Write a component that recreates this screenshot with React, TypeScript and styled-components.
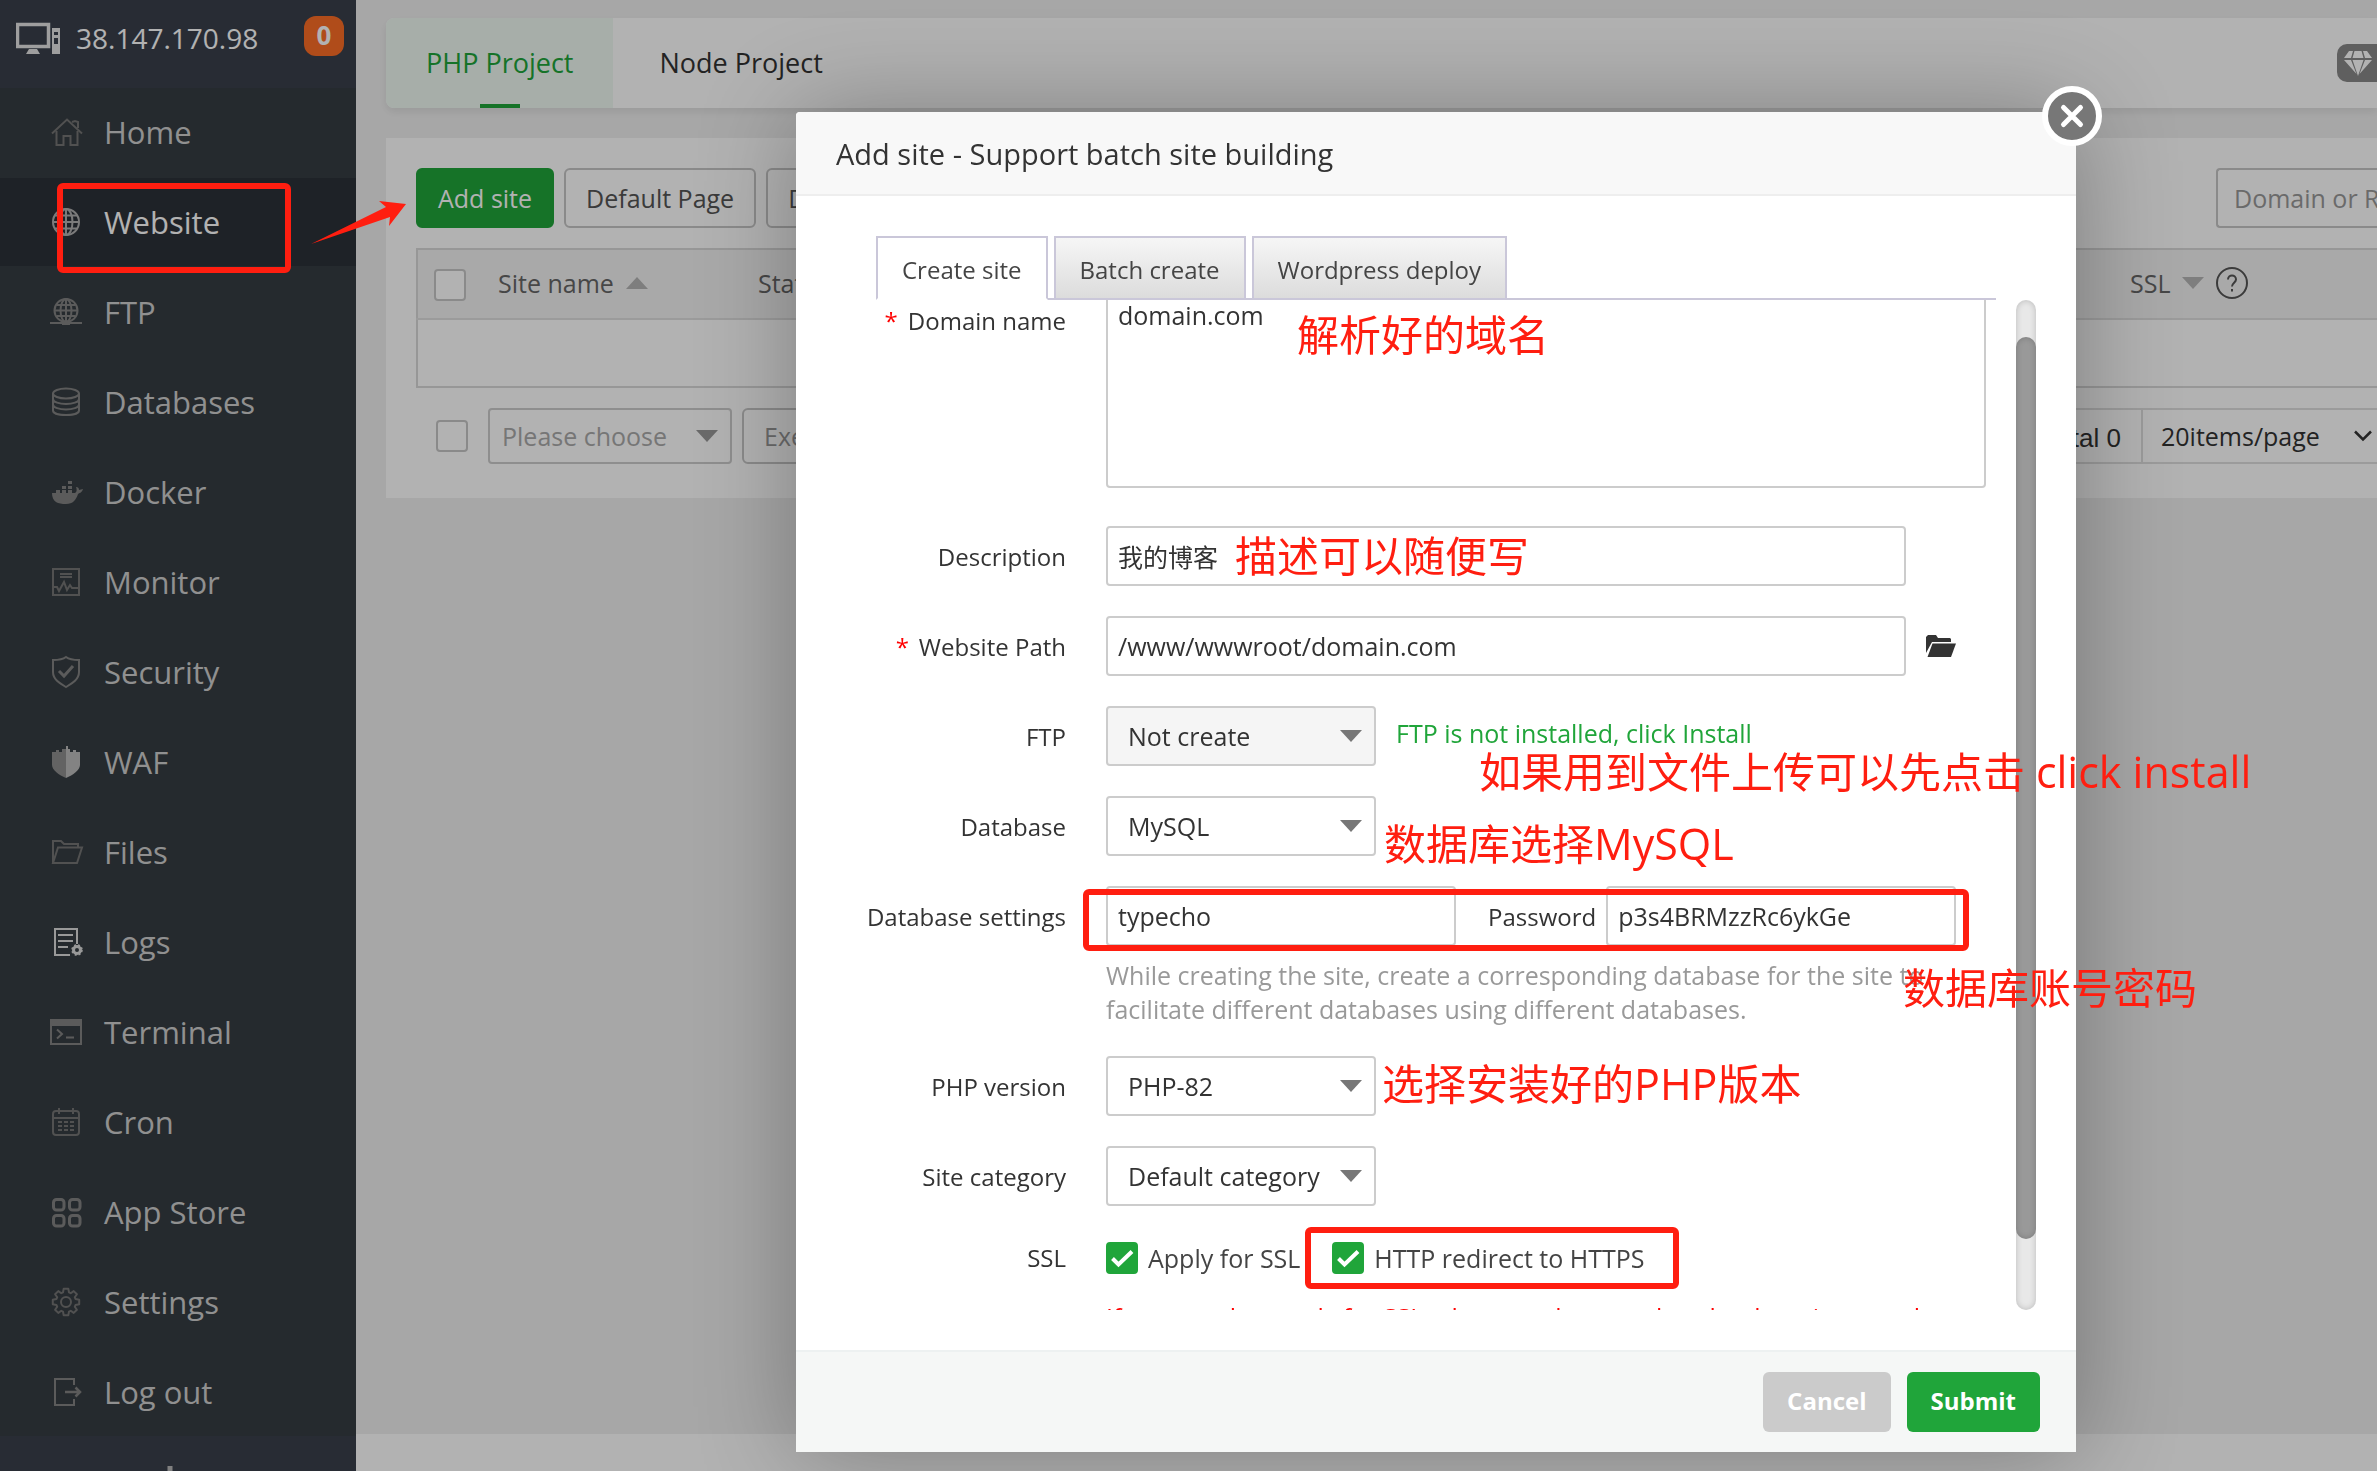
import React, { useEffect, useRef } from "react";
import styled, { createGlobalStyle, css } from "styled-components";

const GlobalStyle = createGlobalStyle`
  *, *::before, *::after { box-sizing: border-box; }
  html, body { margin: 0; padding: 0; overflow: hidden; }
  body, button, input, select, textarea {
    font-family: "Open Sans", "Noto Sans CJK SC", sans-serif;
    font-size: 25px;
    color: #333;
  }
  button { cursor: pointer; }
`;

/* ---------- shell ---------- */

const Shell = styled.div`
  display: flex;
  height: 100vh;
  background: #f0f0f0;
  overflow: hidden;
`;

const Sidebar = styled.aside`
  display: flex;
  flex-direction: column;
  flex: 0 0 356px;
  background: #3a404b;
`;

const ServerBar = styled.header`
  display: flex;
  align-items: flex-start;
  flex: 0 0 88px;
  padding: 16px 12px 0 16px;
`;

const ServerIcon = styled.svg`
  width: 44px;
  height: 32px;
  margin: 6px 16px 0 0;
`;

const ServerName = styled.span`
  flex: 1;
  font-size: 28px;
  line-height: 44px;
  color: #fff;
`;

const Badge = styled.span`
  width: 40px;
  border-radius: 12px;
  background: #fc6d26;
  color: #fff;
  font-size: 26px;
  font-weight: 700;
  line-height: 38px;
  height: 40px;
  text-align: center;
`;

const Menu = styled.ul`
  display: flex;
  flex-direction: column;
  gap: 2px;
  margin: 0;
  padding: 0;
  list-style: none;
  background: #363d42;
`;

const MenuLink = styled.a<{ $active?: boolean }>`
  display: flex;
  align-items: center;
  gap: 22px;
  height: 88px;
  padding-left: 50px;
  color: ${(p) => (p.$active ? "#fff" : "#cfcfcf")};
  background: ${(p) => (p.$active ? "#2c3138" : "transparent")};
  font-size: 31px;
  text-decoration: none;
`;

const MenuIcon = styled.svg<{ $tone: string }>`
  width: 32px;
  height: 32px;
  overflow: visible;
  fill: none;
  color: ${(p) => p.$tone};
  stroke: currentColor;
  stroke-width: 2;
`;

const SidebarFoot = styled.div`
  display: flex;
  justify-content: center;
  padding-top: 30px;
  padding-right: 16px;
`;

const PlusIcon = styled.svg`
  width: 32px;
  height: 32px;
  flex: none;
`;

const Main = styled.main`
  display: flex;
  flex-direction: column;
  flex: 1;
  min-width: 0;
`;

const Content = styled.div`
  display: flex;
  flex-direction: column;
  flex: 1;
  gap: 30px;
  padding: 18px 0 0 30px;
`;

const PageFoot = styled.footer`
  height: 37px;
  background: #fff;
`;

/* ---------- page content ---------- */

const ProjectBar = styled.nav`
  display: flex;
  align-items: center;
  gap: 6px;
  height: 90px;
  border-radius: 8px 0 0 8px;
  background: #fff;
  box-shadow: 0 4px 8px rgba(0, 0, 0, 0.08);
`;

const ProjectTab = styled.a<{ $active?: boolean }>`
  position: relative;
  height: 90px;
  padding: 0 40px;
  border-radius: 8px 0 0 8px;
  font-size: 27px;
  line-height: 90px;
  text-decoration: none;
  color: ${(p) => (p.$active ? "#20a53a" : "#333")};
  background: ${(p) => (p.$active ? "#eff9f3" : "transparent")};
  ${(p) =>
    p.$active &&
    css`
      &::after {
        content: "";
        position: absolute;
        left: calc(50% - 20px);
        bottom: 0;
        width: 40px;
        height: 4px;
        background: #20a53a;
      }
    `}
`;

const ProBadge = styled.span`
  display: flex;
  align-items: center;
  width: 40px;
  height: 38px;
  margin-left: auto;
  padding-left: 7px;
  border-radius: 10px 0 0 10px;
  background: #888;
`;

const Card = styled.section`
  display: flex;
  flex-direction: column;
  padding: 30px 0 34px 30px;
  background: #fff;
`;

const Toolbar = styled.div`
  display: flex;
  gap: 10px;
  margin-bottom: 20px;
`;

const Button = styled.button<{ $primary?: boolean; $muted?: boolean }>`
  height: ${(p) => (p.$muted ? 56 : 60)}px;
  padding: 0 20px;
  border: 2px solid ${(p) => (p.$primary ? "#20a53a" : "#c6c6c6")};
  border-radius: 6px;
  background: ${(p) => (p.$primary ? "#20a53a" : "#fff")};
  color: ${(p) => (p.$primary ? "#fff" : p.$muted ? "#999" : "#555")};
  white-space: nowrap;
`;

const SearchInput = styled.input`
  width: 161px;
  height: 60px;
  margin-left: auto;
  padding: 0 0 0 16px;
  border: 2px solid #c6c6c6;
  border-right: 0;
  border-radius: 4px 0 0 4px;
  &::placeholder {
    color: #999;
  }
`;

const SiteTable = styled.table`
  width: 100%;
  table-layout: fixed;
  border-collapse: collapse;
  border: 2px solid #d8d8d8;
  border-right: 0;
  margin-bottom: 20px;
`;

const HeadCell = styled.th<{ $width?: number }>`
  width: ${(p) => (p.$width ? `${p.$width}px` : "auto")};
  height: 70px;
  padding: 0 16px 2px;
  border-bottom: 2px solid #dedede;
  background: #f3f3f3;
  color: #666;
  font-weight: 400;
  text-align: left;
  white-space: nowrap;
`;

const BodyCell = styled.td`
  height: 68px;
  padding: 0;
`;

const HeadLine = styled.span<{ $gap: number }>`
  display: flex;
  align-items: center;
  gap: ${(p) => p.$gap}px;
`;

const TableFoot = styled.div`
  display: flex;
  align-items: center;
  gap: 10px;
  padding-left: 20px;
`;

const Pager = styled.div`
  display: flex;
  height: 56px;
  margin-left: auto;
  border: 2px solid #dedede;
  border-right: 0;
`;

const PagerTotal = styled.span`
  padding: 2px 20px 0;
  font-family: "Liberation Sans", sans-serif;
  font-size: 26px;
  line-height: 52px;
`;

const PagerSize = styled.label`
  display: grid;
  align-items: center;
  width: 236px;
  border-left: 2px solid #dedede;
`;

const PagerSelect = styled.select`
  grid-area: 1 / 1;
  height: 52px;
  padding: 0 0 0 18px;
  border: 0;
  background: transparent;
  appearance: none;
`;

const PagerChevron = styled.svg`
  grid-area: 1 / 1;
  justify-self: end;
  width: 20px;
  height: 12px;
  margin-right: 4px;
  pointer-events: none;
`;

/* ---------- shared controls ---------- */

const TickWrap = styled.span`
  display: inline-grid;
  width: 32px;
  height: 32px;
  vertical-align: middle;
`;

const TickInput = styled.input`
  grid-area: 1 / 1;
  width: 32px;
  height: 32px;
  margin: 0;
  border: 2px solid #c6c6c6;
  border-radius: 4px;
  background: #fff;
  appearance: none;
  &:checked {
    border-color: #20a53a;
    background: #20a53a;
  }
`;

const TickMark = styled.svg`
  grid-area: 1 / 1;
  width: 32px;
  height: 32px;
  pointer-events: none;
  input:not(:checked) + & {
    visibility: hidden;
  }
`;

function Tick(props: { id: string; checked?: boolean; label?: string }) {
  return (
    <TickWrap>
      <TickInput type="checkbox" id={props.id} defaultChecked={props.checked} aria-label={props.label} />
      <TickMark viewBox="0 0 32 32">
        <path d="M6.500 16.500l6 6L26 9.500" fill="none" stroke="#fff" strokeWidth="4" />
      </TickMark>
    </TickWrap>
  );
}

const SelectWrap = styled.span<{ $width: number; $height: number }>`
  display: inline-grid;
  align-items: center;
  width: ${(p) => p.$width}px;
  height: ${(p) => p.$height}px;
`;

const SelectInput = styled.select<{ $inset: number; $color: string }>`
  grid-area: 1 / 1;
  width: 100%;
  height: 100%;
  padding: 0 44px 0 ${(p) => p.$inset}px;
  border: 2px solid #ccc;
  border-radius: 4px;
  background: #fff;
  color: ${(p) => p.$color};
  opacity: 1;
  appearance: none;
  &:disabled {
    background: #f5f5f5;
  }
`;

const Caret = styled.svg`
  grid-area: 1 / 1;
  justify-self: end;
  width: 22px;
  height: 12px;
  margin-right: 14px;
  pointer-events: none;
`;

const SortCaret = styled.svg`
  width: 22px;
  height: 12px;
`;

function Select(props: {
  id: string;
  value: string;
  width?: number;
  height?: number;
  inset?: number;
  color?: string;
  disabled?: boolean;
  label?: string;
}) {
  const { id, value, width = 270, height = 60, inset = 20, color = "#333", disabled, label } = props;
  return (
    <SelectWrap $width={width} $height={height}>
      <SelectInput id={id} $inset={inset} $color={color} disabled={disabled} aria-label={label}>
        <option>{value}</option>
      </SelectInput>
      <Caret viewBox="0 0 22 12">
        <path d="M0 0h22L11 12z" fill={height === 60 ? "#777" : "#999"} />
      </Caret>
    </SelectWrap>
  );
}

/* ---------- dialog ---------- */

const Shade = styled.div`
  position: fixed;
  inset: 0;
  background: rgba(0, 0, 0, 0.3);
`;

const Dialog = styled.section`
  position: absolute;
  left: 796px;
  top: 112px;
  display: flex;
  flex-direction: column;
  width: 1280px;
  border-radius: 4px;
  background: #fff;
  box-shadow: 2px 2px 100px rgba(0, 0, 0, 0.3);
`;

const DialogTitle = styled.h2`
  margin: 0;
  padding: 2px 40px 0;
  border-bottom: 2px solid #eee;
  border-radius: 4px 4px 0 0;
  background: #f8f8f8;
  font-size: 29px;
  font-weight: 400;
  line-height: 80px;
`;

const CloseButton = styled.button`
  position: absolute;
  right: -26px;
  top: -26px;
  width: 60px;
  height: 60px;
  padding: 0;
  border: 6px solid #fff;
  border-radius: 50%;
  background: #777;
`;

const DialogBody = styled.div`
  display: flex;
  flex-direction: column;
  padding: 40px;
`;

const Tabs = styled.div`
  display: flex;
  gap: 6px;
  margin: 0 40px;
  border-bottom: 2px solid #cac7d9;
`;

const TabButton = styled.button<{ $active?: boolean }>`
  height: 64px;
  margin-bottom: -2px;
  padding: 2px 24px 0;
  border: 2px solid #cac7d9;
  border-bottom-color: ${(p) => (p.$active ? "#fff" : "#cac7d9")};
  background: ${(p) => (p.$active ? "#fff" : "linear-gradient(#f6f6f6, #dcdcdc)")};
  color: #444;
  font-size: 24px;
  white-space: nowrap;
`;

const ScrollRow = styled.div`
  display: flex;
  justify-content: space-between;
`;

const ScrollArea = styled.div`
  flex: 1;
  height: 1010px;
  overflow-y: auto;
  scrollbar-width: none;
`;

const ScrollTrack = styled.div`
  width: 20px;
  padding-top: 37px;
  border-radius: 10px;
  background: #e8e8e8;
  box-shadow: inset 0 0 6px rgba(0, 0, 0, 0.2);
`;

const ScrollThumb = styled.div`
  height: 902px;
  border-radius: 10px;
  background: #999;
  box-shadow: inset 0 0 6px rgba(0, 0, 0, 0.2);
`;

const Form = styled.form`
  display: flex;
  flex-direction: column;
  gap: 30px;
  padding: 30px 0 24px;
`;

const Row = styled.div`
  display: grid;
  grid-template-columns: 230px 1fr;
  column-gap: 40px;
`;

const RowLabel = styled.label<{ $short?: boolean }>`
  height: ${(p) => (p.$short ? 44 : 60)}px;
  font-size: 24px;
  line-height: ${(p) => (p.$short ? 44 : 62)}px;
  text-align: right;
  white-space: nowrap;
`;

const Star = styled.span`
  margin-right: 10px;
  color: #f00;
`;

const Fields = styled.div<{ $gap?: number }>`
  display: flex;
  flex-wrap: wrap;
  align-items: center;
  column-gap: ${(p) => p.$gap ?? 20}px;
`;

const TextInput = styled.input<{ $width: number }>`
  width: ${(p) => p.$width}px;
  height: 60px;
  padding: 0 10px;
  border: 2px solid #ccc;
  border-radius: 4px;
`;

const DomainArea = styled.textarea`
  width: 880px;
  height: 198px;
  margin-bottom: 8px;
  padding: 6px 10px;
  border: 2px solid #ccc;
  border-radius: 4px;
  line-height: 34px;
  resize: none;
`;

const IconButton = styled.button`
  display: flex;
  padding: 0;
  border: 0;
  background: none;
`;

const GreenLink = styled.a`
  align-self: flex-start;
  line-height: 54px;
  color: #20a53a;
  text-decoration: none;
`;

const PasswordLabel = styled.label`
  margin: 0 -10px 0 12px;
  font-size: 24px;
`;

const Hint = styled.p<{ $warn?: boolean }>`
  width: 860px;
  margin: ${(p) => (p.$warn ? "20px" : "12px")} 0 0;
  line-height: 34px;
  color: ${(p) => (p.$warn ? "#f00" : "#999")};
`;

const CheckField = styled.label`
  display: flex;
  align-items: center;
  gap: 10px;
  min-height: 44px;
  color: #444;
`;

const DialogFoot = styled.footer`
  display: flex;
  justify-content: flex-end;
  gap: 16px;
  padding: 20px 36px;
  border-top: 2px solid #edf1f1;
  background: #f5f7f6;
`;

const FootButton = styled.button<{ $primary?: boolean }>`
  height: 60px;
  padding: 0 24px 4px;
  border: 0;
  border-radius: 6px;
  background: ${(p) => (p.$primary ? "#20a53a" : "#cbcbcb")};
  color: #fff;
  font-size: 24px;
  font-weight: 700;
`;

/* ---------- red notes drawn over the page ---------- */

const NoteText = styled.span<{ $x: number; $y: number }>`
  position: absolute;
  left: ${(p) => p.$x}px;
  top: ${(p) => p.$y}px;
  color: #ff1e10;
  font-size: 42px;
  line-height: 60px;
  white-space: nowrap;
  pointer-events: none;
`;

const NoteLatin = styled.span`
  font-size: 43px;
`;

const NoteBox = styled.span<{ $x: number; $y: number; $w: number; $h: number }>`
  position: absolute;
  left: ${(p) => p.$x}px;
  top: ${(p) => p.$y}px;
  width: ${(p) => p.$w}px;
  height: ${(p) => p.$h}px;
  border: 6px solid #ff1e10;
  border-radius: 6px;
  pointer-events: none;
`;

const NoteArrow = styled.svg`
  position: absolute;
  left: 310px;
  top: 200px;
  width: 98px;
  height: 46px;
  pointer-events: none;
`;

/* ---------- data ---------- */

const dots = (xs: number[], ys: number[], w: number, h: number) =>
  ys.map((y) => xs.map((x) => <rect key={`${x}-${y}`} x={x} y={y} width={w} height={h} fill="currentColor" stroke="none" />));

const gearPath = (() => {
  const pts: string[] = [];
  for (let i = 0; i < 8; i++) {
    const a = (i * Math.PI) / 4;
    [[-0.3, 10], [-0.17, 13.4], [0.17, 13.4], [0.3, 10]].forEach(([d, r]) => {
      pts.push(`${(16 + r * Math.sin(a + d)).toFixed(1)} ${(16 - r * Math.cos(a + d)).toFixed(1)}`);
    });
  }
  return `M${pts.join("L")}Z`;
})();

const DIM = "#838383";

const menu: { name: string; tone?: string; icon: React.ReactNode }[] = [
  {
    name: "Home",
    tone: "#747474",
    icon: (
      <>
        <path d="M2 17.500L17 3.500l15 14" />
        <path d="M6.500 15v14h7v-9h7v9h7V15M22 6l3-1 3 1v6" />
      </>
    ),
  },
  {
    name: "Website",
    tone: "#b0b0b0",
    icon: (
      <>
        <circle cx="16" cy="16" r="13" />
        <ellipse cx="16" cy="16" rx="6.500" ry="13" />
        <path d="M16 3v26M3 16h26M5 9.500h22M5 22.500h22" />
      </>
    ),
  },
  {
    name: "FTP",
    icon: (
      <>
        <circle cx="16" cy="14.500" r="11.500" />
        <ellipse cx="16" cy="14.500" rx="5.500" ry="11.500" />
        <path d="M16 3v23M5 14.500h22M6.500 9h19M6.500 20h19M0 27h32" />
        <rect x="12" y="25" width="8" height="4" fill="currentColor" stroke="none" />
      </>
    ),
  },
  {
    name: "Databases",
    icon: (
      <>
        <ellipse cx="16" cy="7.500" rx="13" ry="5" />
        <path d="M3 7.500v17c0 6 26 6 26 0v-17M3 13c0 6.500 26 6.500 26 0M3 18.500c0 6.500 26 6.500 26 0" />
      </>
    ),
  },
  {
    name: "Docker",
    icon: (
      <>
        <path d="M2 17h23c2-1 2-4 1-6 2 0 3 1 3 3l4-1c-1 4-4 4-5 5-2 6-5 10-12 10-8 0-14-2-14-11z" fill="currentColor" stroke="none" />
        {dots([6, 12, 18], [14], 4, 4)}
        {dots([12, 18], [10], 4, 3)}
        {dots([18], [5], 4, 3)}
      </>
    ),
  },
  {
    name: "Monitor",
    tone: "#747474",
    icon: (
      <>
        <rect x="3" y="3" width="26" height="26" />
        <path d="M10 8h12M10 11h12M3 21h4l2 4 5-9 3 8 3-5 2 3h7" />
      </>
    ),
  },
  {
    name: "Security",
    icon: (
      <>
        <path d="M16 1C12 4 8 4 3 4v12c0 8 8 12 13 15 5-3 13-7 13-15V4c-5 0-9 0-13-3z" />
        <path d="M9 15l5 5 9-10" strokeWidth="3" />
      </>
    ),
  },
  {
    name: "WAF",
    tone: "#a8a8a8",
    icon: (
      <>
        <path d="M2 6h4V4h3v2h3V3h4v29C9 29 2 24 2 19z" fill="#8e8e8e" stroke="none" />
        <path d="M30 6h-4V4h-3v2h-3V3h-2V0h-2v32c7-3 14-8 14-13z" fill="#bcbcbc" stroke="none" />
      </>
    ),
  },
  {
    name: "Files",
    tone: "#747474",
    icon: (
      <>
        <path d="M3 27V5h8l3 3h14v3" />
        <path d="M3 27L8 11.500h24L27 27z" />
      </>
    ),
  },
  {
    name: "Logs",
    tone: "#dcdcdc",
    icon: (
      <>
        <path d="M20 29H5V3h22v15" />
        <path d="M8 9h15M8 15h15M8 21h10" />
        <circle cx="27" cy="24" r="3.500" strokeWidth="3" />
        <circle cx="27" cy="24" r="5" strokeWidth="1.500" strokeDasharray="2 2" />
      </>
    ),
  },
  {
    name: "Terminal",
    icon: (
      <>
        <rect x="1" y="4" width="30" height="24" />
        <rect x="1" y="4" width="30" height="6" fill="currentColor" stroke="none" />
        <path d="M7 13.500l5 4.500-5 4.500M16 21.500h8" />
      </>
    ),
  },
  {
    name: "Cron",
    tone: "#747474",
    icon: (
      <>
        <rect x="3" y="5" width="26" height="24" rx="3" />
        <path d="M3 12h26M9 2v6M23 2v6" />
        {dots([8, 14, 20], [15, 19, 23], 4, 2)}
      </>
    ),
  },
  {
    name: "App Store",
    icon: (
      <>
        <rect x="3.500" y="3.500" width="10.500" height="10.500" rx="3" strokeWidth="3" />
        <rect x="19.500" y="3.500" width="10.500" height="10.500" rx="3" strokeWidth="3" />
        <rect x="3.500" y="19.500" width="10.500" height="10.500" rx="3" strokeWidth="3" />
        <rect x="19.500" y="19.500" width="10.500" height="10.500" rx="3" strokeWidth="3" />
      </>
    ),
  },
  {
    name: "Settings",
    tone: "#747474",
    icon: (
      <>
        <path d={gearPath} strokeLinejoin="round" />
        <circle cx="16" cy="16" r="5" />
      </>
    ),
  },
  {
    name: "Log out",
    icon: (
      <>
        <path d="M24 9V3H5v26h19v-6" />
        <path d="M15 16h15M25.500 11.500L30 16l-4.500 4.500" strokeWidth="2.500" />
      </>
    ),
  },
];

/* ---------- views ---------- */

function SideNav() {
  return (
    <Sidebar>
      <ServerBar>
        <ServerIcon viewBox="0 0 44 32">
          <rect x="1.500" y="2.500" width="31" height="22" fill="none" stroke="#e2e2e2" strokeWidth="3.500" />
          <path d="M13 27h8l3 5H10z" fill="#e2e2e2" />
          <path d="M36 6h8v26h-8zM38 10v3h4v-3zM38 16v6h4v-6z" fill="#e2e2e2" fillRule="evenodd" />
        </ServerIcon>
        <ServerName>38.147.170.98</ServerName>
        <Badge>0</Badge>
      </ServerBar>
      <Menu>
        {menu.map((item) => (
          <li key={item.name}>
            <MenuLink href="#" $active={item.name === "Website"}>
              <MenuIcon viewBox="0 0 32 32" $tone={item.tone ?? DIM}>
                {item.icon}
              </MenuIcon>
              {item.name}
            </MenuLink>
          </li>
        ))}
      </Menu>
      <SidebarFoot>
        <PlusIcon viewBox="0 0 32 32">
          <path d="M16 0v32M0 16h32" stroke="#b8b8b8" strokeWidth="5" />
        </PlusIcon>
      </SidebarFoot>
    </Sidebar>
  );
}

function SitesPage() {
  return (
    <Main>
      <Content>
        <ProjectBar>
          <ProjectTab href="#" $active>
            PHP Project
          </ProjectTab>
          <ProjectTab href="#">Node Project</ProjectTab>
          <ProBadge>
            <svg width="28" height="25" viewBox="0 0 28 25">
              <path d="M5 0h4L7 7H0zM10.500 0h7l2 7h-11zM19 0h4l5 7h-7zM0 9h7l5.500 14zM8.500 9h11L14 25zM21 9h7L15.500 23z" fill="#fff" />
            </svg>
          </ProBadge>
        </ProjectBar>
        <Card>
          <Toolbar>
            <Button $primary>Add site</Button>
            <Button>Default Page</Button>
            <Button>Default Website</Button>
            <SearchInput placeholder="Domain or Remarks" aria-label="Search sites" />
          </Toolbar>
          <SiteTable>
            <thead>
              <tr>
                <HeadCell $width={65}>
                  <Tick id="all" label="Select all sites" />
                </HeadCell>
                <HeadCell $width={260}>
                  <HeadLine $gap={12}>
                    Site name
                    <SortCaret viewBox="0 0 22 12">
                      <path d="M0 12h22L11 0z" fill="#b5b5b5" />
                    </SortCaret>
                  </HeadLine>
                </HeadCell>
                <HeadCell>Status</HeadCell>
                <HeadCell $width={263}>
                  <HeadLine $gap={12}>
                    SSL
                    <SortCaret viewBox="0 0 22 12">
                      <path d="M0 0h22L11 12z" fill="#b5b5b5" />
                    </SortCaret>
                    <svg width="32" height="32" viewBox="0 0 32 32" fill="none" stroke="#555" strokeWidth="2">
                      <circle cx="16" cy="16" r="15" />
                      <path d="M12 12.500c0-5.500 8-5.500 8 0 0 3-4 3.500-4 7M16 22v2.500" />
                    </svg>
                  </HeadLine>
                </HeadCell>
              </tr>
            </thead>
            <tbody>
              <tr>
                <BodyCell colSpan={4} />
              </tr>
            </tbody>
          </SiteTable>
          <TableFoot>
            <Tick id="batch" label="Select for batch action" />
            <span />
            <Select id="action" value="Please choose" width={244} height={56} inset={12} color="#aaa" label="Batch action" />
            <Button $muted>Execute</Button>
            <Pager>
              <PagerTotal>Total 0</PagerTotal>
              <PagerSize>
                <PagerSelect aria-label="Items per page">
                  <option>20items/page</option>
                </PagerSelect>
                <PagerChevron viewBox="0 0 20 12">
                  <path d="M2 1.500l8 8 8-8" fill="none" stroke="#333" strokeWidth="2.500" />
                </PagerChevron>
              </PagerSize>
            </Pager>
          </TableFoot>
        </Card>
      </Content>
      <PageFoot />
    </Main>
  );
}

function AddSiteDialog() {
  const area = useRef<HTMLDivElement>(null);
  useEffect(() => {
    if (area.current) area.current.scrollTop = 40;
  }, []);

  return (
    <Dialog role="dialog" aria-labelledby="dialog-title">
      <DialogTitle id="dialog-title">Add site - Support batch site building</DialogTitle>
      <CloseButton aria-label="Close">
        <svg width="48" height="48" viewBox="0 0 48 48">
          <path d="M15.500 15.500l17 17M32.500 15.500l-17 17" stroke="#fff" strokeWidth="5" strokeLinecap="round" />
        </svg>
      </CloseButton>
      <DialogBody>
        <Tabs>
          <TabButton $active>Create site</TabButton>
          <TabButton>Batch create</TabButton>
          <TabButton>Wordpress deploy</TabButton>
        </Tabs>
        <ScrollRow>
          <ScrollArea ref={area}>
            <Form>
              <Row>
                <RowLabel htmlFor="domain">
                  <Star>*</Star>Domain name
                </RowLabel>
                <DomainArea id="domain" defaultValue="domain.com" />
              </Row>
              <FormRows />
            </Form>
          </ScrollArea>
          <ScrollTrack>
            <ScrollThumb />
          </ScrollTrack>
        </ScrollRow>
      </DialogBody>
      <DialogFoot>
        <FootButton>Cancel</FootButton>
        <FootButton $primary>Submit</FootButton>
      </DialogFoot>
    </Dialog>
  );
}

function FormRows() {
  return (
    <>
      <Row>
        <RowLabel htmlFor="desc">Description</RowLabel>
        <Fields>
          <TextInput id="desc" $width={800} defaultValue="我的博客" />
        </Fields>
      </Row>
      <Row>
        <RowLabel htmlFor="path">
          <Star>*</Star>Website Path
        </RowLabel>
        <Fields>
          <TextInput id="path" $width={800} defaultValue="/www/wwwroot/domain.com" />
          <IconButton type="button" aria-label="Choose folder">
            <svg width="30" height="24" viewBox="0 0 30 24">
              <path d="M0 19V3l2-2h8l2 3h12l1 1v3H6z" fill="#333" />
              <path d="M6.500 9.500H30L25 23H1.500z" fill="#333" />
            </svg>
          </IconButton>
        </Fields>
      </Row>
      <Row>
        <RowLabel htmlFor="ftp">FTP</RowLabel>
        <Fields>
          <Select id="ftp" value="Not create" disabled />
          <GreenLink href="#">FTP is not installed, click Install</GreenLink>
        </Fields>
      </Row>
      <Row>
        <RowLabel htmlFor="db">Database</RowLabel>
        <Fields>
          <Select id="db" value="MySQL" />
        </Fields>
      </Row>
      <Row>
        <RowLabel htmlFor="dbname">Database settings</RowLabel>
        <Fields>
          <TextInput id="dbname" $width={350} defaultValue="typecho" />
          <PasswordLabel htmlFor="dbpass">Password</PasswordLabel>
          <TextInput id="dbpass" $width={350} defaultValue="p3s4BRMzzRc6ykGe" />
          <Hint>
            While creating the site, create a corresponding database for the site to facilitate different databases
            using different databases.
          </Hint>
        </Fields>
      </Row>
      <Row>
        <RowLabel htmlFor="php">PHP version</RowLabel>
        <Fields>
          <Select id="php" value="PHP-82" />
        </Fields>
      </Row>
      <Row>
        <RowLabel htmlFor="category">Site category</RowLabel>
        <Fields>
          <Select id="category" value="Default category" />
        </Fields>
      </Row>
      <Row>
        <RowLabel as="span" $short>
          SSL
        </RowLabel>
        <Fields $gap={32}>
          <CheckField htmlFor="ssl">
            <Tick id="ssl" checked />
            Apply for SSL
          </CheckField>
          <CheckField htmlFor="https">
            <Tick id="https" checked />
            HTTP redirect to HTTPS
          </CheckField>
          <Hint $warn>
            If you need to apply for SSL, please make sure that the domain name has been resolved
          </Hint>
        </Fields>
      </Row>
    </>
  );
}

function Notes() {
  return (
    <>
      <NoteBox $x={57} $y={183} $w={234} $h={90} />
      <NoteArrow viewBox="310 200 98 46">
        <path d="M311 244L386 207L379 201L406 204L389 226L390 217Z" fill="#ff1e10" />
      </NoteArrow>
      <NoteText $x={1297} $y={305}>解析好的域名</NoteText>
      <NoteText $x={1235} $y={526}>描述可以随便写</NoteText>
      <NoteText $x={1479} $y={742}>
        如果用到文件上传可以先点击 <NoteLatin>click install</NoteLatin>
      </NoteText>
      <NoteText $x={1384} $y={814}>
        数据库选择<NoteLatin>MySQL</NoteLatin>
      </NoteText>
      <NoteBox $x={1083} $y={889} $w={886} $h={62} />
      <NoteText $x={1903} $y={958}>数据库账号密码</NoteText>
      <NoteText $x={1382} $y={1054}>
        选择安装好的<NoteLatin>PHP</NoteLatin>版本
      </NoteText>
      <NoteBox $x={1305} $y={1227} $w={374} $h={62} />
    </>
  );
}

export default function App() {
  return (
    <>
      <GlobalStyle />
      <Shell>
        <SideNav />
        <SitesPage />
      </Shell>
      <Shade />
      <AddSiteDialog />
      <Notes />
    </>
  );
}
